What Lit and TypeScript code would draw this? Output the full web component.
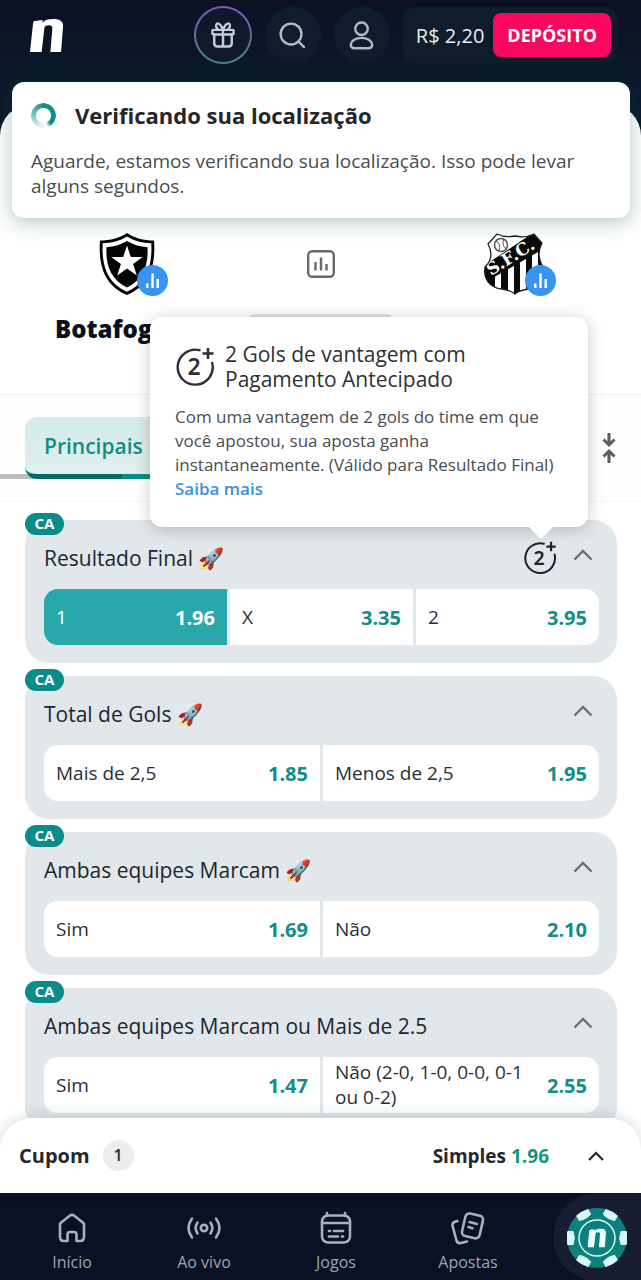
import { LitElement, html, css, svg } from 'lit';
import { customElement, property, state } from 'lit/decorators.js';

const logoMark = svg`<path fill="currentColor" d="M5 2 L13 1 L12.600 4 C15 1 19 0 24 0 C31 0 34.500 2.500 34 8 L32 34 H21 L23 10 C23.200 7.500 22 6.500 19 6.500 C16.500 6.500 15 7.500 14.700 10 L12 34 H0 L3 6 C3.200 3.500 3.500 2.200 5 2 Z"/>`;

const chevron = html`<svg class="chevron" viewBox="0 0 20 12" width="20" height="12" aria-hidden="true">
  <path d="M1.500 10.500 L10 2 L18.500 10.500" fill="none" stroke="currentColor" stroke-width="2.400" />
</svg>`;

const earlyPayout = (size: number) => html`<svg viewBox="0 0 40 40" width=${size} height=${size} aria-hidden="true">
  <path d="M24.500 3.200 A17.500 17.500 0 1 0 37.200 16" fill="none" stroke="currentColor" stroke-width="2.400" stroke-linecap="round" />
  <path d="M33 1 V12 M27.500 6.500 H38.500" fill="none" stroke="currentColor" stroke-width="2.600" />
  <text x="19" y="28" text-anchor="middle" font-family="Noto Sans, sans-serif" font-weight="600" font-size="23" fill="currentColor">2</text>
</svg>`;

const statsBadge = html`<svg class="stats" viewBox="0 0 31 31" width="31" height="31" aria-hidden="true">
  <circle cx="15.500" cy="15.500" r="15.500" fill="#3794f3" />
  <path d="M10.300 18.500 V23 M15.500 8.500 V23 M20.700 14 V23" stroke="#fff" stroke-width="2.400" />
</svg>`;

const crests: Record<string, unknown> = {
  botafogo: html`<svg viewBox="0 0 58 64" width="58" height="64" aria-hidden="true">
    <path d="M29 1 C36 6 46 8.500 56 8.500 C58 34 51 54 29 63 C7 54 0 34 2 8.500 C12 8.500 22 6 29 1 Z" fill="#050505" />
    <path d="M29 4.500 C36 9 45 11 53.300 11.300 C54.500 34 48.500 51 29 59.800 C9.500 51 3.500 34 4.700 11.300 C13 11 22 9 29 4.500 Z" fill="#fff" />
    <path d="M29 9 C36 13 42 14.800 49.500 15.200 C50.500 34 45 47.500 29 55.500 C13 47.500 7.500 34 8.500 15.200 C16 14.800 22 13 29 9 Z" fill="#050505" />
    <path d="M29 13.500 L32.800 25 H44.700 L35.100 32 L38.800 43.500 L29 36.500 L19.200 43.500 L22.900 32 L13.300 25 H25.200 Z" fill="#fff" />
  </svg>`,
  santos: html`<svg viewBox="0 0 60 62" width="60" height="64" aria-hidden="true">
    <defs><clipPath id="shield"><path d="M4 11 L13 1 C19 4 24 4.500 31 3 C38 4.500 44 4 50 1 L58 10 C53 20 55 27 59 34 C62 46 55 55 44 56 C38 57 34 58 31 61 C28 58 24 57 18 56 C6 55 -1 46 1 34 C8 27 9 20 4 11 Z" /></clipPath></defs>
    <g clip-path="url(#shield)">
      <rect width="62" height="62" fill="#fff" />
      <path d="M0 40 V62 H11 V36 Z M17 36 V62 H24 V36 Z M30 26 V62 H36 V26 Z M42 20 V62 H48 V20 Z M54 14 V62 H62 V14 Z" fill="#0a0a0a" />
      <path d="M-2 34 L46 2 H64 V16 L54 19 L0 50 Z" fill="#0a0a0a" />
      <g fill="none" stroke="#555"><circle cx="17" cy="12" r="6.500" stroke-width="1.500" /><path d="M12 8 Q17 10 15 18 M20 6 Q17 11 22 16" /></g>
      <text transform="translate(7 43) rotate(-32)" fill="#fff" font-family="DejaVu Serif, serif" font-weight="700" font-size="17">S.F.C.</text>
    </g>
    <path d="M4 11 L13 1 C19 4 24 4.500 31 3 C38 4.500 44 4 50 1 L58 10 C53 20 55 27 59 34 C62 46 55 55 44 56 C38 57 34 58 31 61 C28 58 24 57 18 56 C6 55 -1 46 1 34 C8 27 9 20 4 11 Z" fill="none" stroke="#222" stroke-width="1.300" />
  </svg>`,
};

const navIcons: Record<string, unknown> = {
  home: svg`<path d="M4 11.500 L14 3.500 Q16 2.200 18 3.500 L28 11.500 V25 Q28 29 24 29 H20.500 V22.500 Q20.500 20 18 20 H14 Q11.500 20 11.500 22.500 V29 H8 Q4 29 4 25 Z" />`,
  live: svg`<circle cx="16" cy="16" r="3.200" /><path d="M9.500 10.500 Q5.800 16 9.500 21.500 M22.500 10.500 Q26.200 16 22.500 21.500 M4 6.500 Q-3 16 4 25.500 M28 6.500 Q35 16 28 25.500" />`,
  games: svg`<rect x="2" y="3.500" width="28" height="27" rx="6" /><path d="M2 11 H30 M7 1 V4 M25 1 V4 M9 19 H10 M14 19 H23 M9 24.500 H18 M22 24.500 H23" />`,
  bets: svg`<rect x="11.500" y="2.500" width="18" height="23" rx="4" transform="rotate(13 21 14)" /><path d="M17.500 10 L25 12 M16.500 15 L20.500 16.200 M5.500 9 L3 9.800 Q0 10.800 .6 14 L4.500 28.500 Q5.500 31.800 9 31 L15 29.500" />`,
};

interface Pick { label: string; odd: string; active?: boolean }
interface Market { title: string; boosted?: boolean; early?: boolean; picks: Pick[] }

@customElement('market-card')
class MarketCard extends LitElement {
  @property({ attribute: false }) market!: Market;

  static styles = css`
    :host { display: block; position: relative; }
    * { box-sizing: border-box; }
    svg { flex: none; }
    button { font: inherit; color: inherit; border: 0; background: none; padding: 0; cursor: pointer; }
    .card { background: #e1e7ea; border-radius: 24px; padding: 0 18px 18px 19px; }
    .tag { position: absolute; top: -7px; left: 0; width: 39px; height: 22px; border-radius: 11px; background: #098c8a; color: #fff; font-size: 15px; font-weight: 700; line-height: 20px; text-align: center; }
    header { display: flex; align-items: center; height: 69px; padding-top: 6px; gap: 13px; }
    h2 { flex: 1; margin: 0; font-size: 21px; line-height: 28px; font-weight: 500; color: #20262f; }
    .info, .toggle { display: flex; }
    .toggle { color: #6c7075; padding: 0 6px 6px 3px; }
    .info { color: #20232d; }
    .picks { display: grid; grid-auto-flow: column; grid-auto-columns: 1fr; gap: 3px; border-radius: 14px; overflow: hidden; }
    .picks button { display: flex; align-items: center; justify-content: space-between; gap: 12px; height: 56px; padding: 0 12px; background: #fff; text-align: left; font-size: 19px; font-weight: 500; line-height: 25px; color: #2b2e33; }
    .picks strong { font-size: 20px; font-weight: 700; color: #128d88; }
    .picks .active, .picks .active strong { color: #fff; }
    .picks .active { background: #28a8aa; }
    .tip { position: absolute; z-index: 2; right: 29px; bottom: calc(100% - 7px); width: 438px; padding: 25px 25px 26px; border-radius: 12px; background: #fff; box-shadow: 0 2px 16px #00000038; color: #4a4c50; font-size: 17px; line-height: 24px; }
    .tip::after { content: ''; position: absolute; right: 37px; bottom: -8px; width: 20px; height: 20px; border-radius: 3px; background: #fff; transform: rotate(45deg); }
    .tiphead { display: flex; align-items: center; gap: 10px; margin-bottom: 13px; color: #2e3035; }
    .tip h3 { max-width: 280px; margin: 0; font-size: 21px; line-height: 25px; font-weight: 500; }
    .tip p { margin: 0; }
    .tip a { color: #3b8fdd; text-decoration: none; font-weight: 600; }
  `;

  render() {
    const m = this.market;
    return html`
      <section class="card">
        <span class="tag">CA</span>
        <header>
          <h2>${m.title}${m.boosted ? ' 🚀' : ''}</h2>
          ${m.early ? html`<button class="info" aria-label="Pagamento antecipado">${earlyPayout(34)}</button>` : ''}
          <button class="toggle" aria-label="Recolher">${chevron}</button>
        </header>
        <div class="picks">
          ${m.picks.map((p) => html`<button class=${p.active ? 'active' : ''}><span>${p.label}</span><strong>${p.odd}</strong></button>`)}
        </div>
      </section>
      ${m.early ? html`<div class="tip" role="tooltip">
        <div class="tiphead">${earlyPayout(40)}<h3>2 Gols de vantagem com Pagamento Antecipado</h3></div>
        <p>Com uma vantagem de 2 gols do time em que você apostou, sua aposta ganha instantaneamente. (Válido para Resultado Final)</p>
        <a href="#">Saiba mais</a>
      </div>` : ''}
    `;
  }
}

@customElement('app-root')
class AppRoot extends LitElement {
  @state() markets: Market[] = [
    { title: 'Resultado Final', boosted: true, early: true, picks: [{ label: '1', odd: '1.96', active: true }, { label: 'X', odd: '3.35' }, { label: '2', odd: '3.95' }] },
    { title: 'Total de Gols', boosted: true, picks: [{ label: 'Mais de 2,5', odd: '1.85' }, { label: 'Menos de 2,5', odd: '1.95' }] },
    { title: 'Ambas equipes Marcam', boosted: true, picks: [{ label: 'Sim', odd: '1.69' }, { label: 'Não', odd: '2.10' }] },
    { title: 'Ambas equipes Marcam ou Mais de 2.5', picks: [{ label: 'Sim', odd: '1.47' }, { label: 'Não (2-0, 1-0, 0-0, 0-1 ou 0-2)', odd: '2.55' }] },
  ];

  static styles = css`
    :host { display: flex; flex-direction: column; position: relative; height: 100vh; overflow: hidden; background: linear-gradient(#0b1023, #0a1a2a 80px, #0a1a2a); font-family: 'Open Sans', 'Noto Sans', sans-serif; color: #26282d; }
    * { box-sizing: border-box; }
    button { font: inherit; color: inherit; border: 0; background: none; padding: 0; cursor: pointer; }
    a { text-decoration: none; color: inherit; }
    .top { flex: none; display: flex; align-items: center; gap: 13px; height: 104px; padding: 0 24px 34px 30px; }
    .logo { display: flex; margin-right: auto; color: #fff; }
    .round { display: flex; align-items: center; justify-content: center; width: 56px; height: 56px; border-radius: 50%; background: #0f1c2d; color: #b3b9c6; }
    .gift { width: 58px; height: 58px; border: 2px solid transparent; background: linear-gradient(#0f172b, #0e1b2c) padding-box, linear-gradient(#7d59b4, #41868c) border-box; color: #c5cad6; }
    .wallet { display: flex; align-items: center; gap: 9px; height: 56px; padding: 0 6px 0 13px; border-radius: 12px; background: #0e1c2c; color: #e9edf3; font-size: 20px; white-space: nowrap; }
    .deposit { height: 44px; padding: 0 14px; border-radius: 8px; background: #f9085f; color: #fff; font-size: 18px; font-weight: 700; }
    main { flex: 1; min-height: 0; overflow: hidden; border-radius: 32px 32px 0 0; background: #fff; }
    .match { display: grid; grid-template-columns: 1fr 134px 1fr; align-items: start; height: 291px; padding: 128px 0 0; border-bottom: 1px solid #f0f0f0; justify-items: center; }
    .team { display: flex; flex-direction: column; align-items: center; gap: 14px; }
    .crest { position: relative; display: flex; height: 66px; }
    .stats { position: absolute; right: -12px; bottom: 2px; }
    .team strong { font-size: 24px; line-height: 34px; font-weight: 800; color: #0c0f20; white-space: nowrap; }
    .mid { display: flex; flex-direction: column; align-items: center; gap: 36px; padding-top: 18px; color: #66696e; }
    .pill { width: 147px; height: 30px; border-radius: 8px; background: #e0e3e4; }
    .tabs { position: relative; display: flex; align-items: center; justify-content: space-between; height: 107px; padding: 0 25px; background: #fefefe; border-bottom: 1px solid #f6f6f6; }
    .tab { height: 62px; padding: 0 19px; border-radius: 12px; border-bottom: 5px solid #0a8d87; background: linear-gradient(#d6ebea, #dfeeef); color: #128d88; font-size: 21px; font-weight: 600; }
    .scrollbar { position: absolute; left: 0; bottom: 22px; width: 19%; height: 5px; background: #00000040; }
    .order { display: flex; padding: 0; color: #5a5d61; }
    .list { display: flex; flex-direction: column; gap: 13px; padding: 18px 24px 0 25px; }
    .toast { position: absolute; z-index: 5; top: 82px; left: 12px; right: 11px; padding: 16px 19px 19px; border-radius: 12px; background: #fff; box-shadow: 0 4px 20px #0a4a4650; }
    .toasthead { display: flex; align-items: center; gap: 19px; margin-bottom: 17px; font-size: 22px; line-height: 34px; font-weight: 700; color: #24262b; }
    .spinner { width: 25px; height: 25px; border-radius: 50%; background: conic-gradient(#128d88 0 38%, #128d8800 45%, #128d8820 55%, #128d88); mask: radial-gradient(circle, transparent 7px, #000 8px); }
    .toast p { margin: 0; font-size: 19px; line-height: 25px; color: #4a4c50; }
    .coupon { flex: none; position: relative; z-index: 3; display: flex; align-items: center; height: 75px; margin-top: -32px; padding: 0 37px 0 19px; border-radius: 32px 32px 0 0; background: #fff; box-shadow: 0 -2px 14px #00303028; font-size: 19px; font-weight: 700; text-align: left; }
    .coupon .name { font-size: 20px; }
    .count { width: 31px; height: 31px; margin-left: 13px; border-radius: 50%; background: #ededed; font-size: 16px; font-weight: 600; line-height: 31px; text-align: center; }
    .simple { margin: 0 39px 0 auto; }
    .simple b { color: #12967f; font-weight: 700; }
    nav { flex: none; display: grid; grid-template-columns: repeat(4, 1fr) 107px; height: 87px; padding-left: 6px; background: #0b1124; color: #9da3b4; font-size: 16px; font-weight: 500; overflow: hidden; }
    nav a { display: flex; flex-direction: column; align-items: center; padding-top: 19px; gap: 6px; line-height: 24px; }
    nav svg { flex: none; }
    .strokes { fill: none; stroke: #a9afbf; stroke-width: 2.600; stroke-linecap: round; stroke-linejoin: round; overflow: visible; }
    .gift .strokes { stroke: currentColor; }
    nav .poker { justify-self: end; width: 88px; height: 88px; padding: 15px 0 0; border-radius: 44px 0 0 44px; background: #171c32; }
  `;

  render() {
    return html`
      <header class="top">
        <a class="logo" href="#" aria-label="Página inicial"><svg viewBox="0 0 35 34" width="34" height="35">${logoMark}</svg></a>
        <button class="round gift" aria-label="Promoções">
          <svg class="strokes" viewBox="0 0 26 28" width="24" height="26"><rect x="1.500" y="8.500" width="23" height="5" rx="1" /><path d="M3.500 13.500 V23 Q3.500 26.500 7 26.500 H19 Q22.500 26.500 22.500 23 V13.500 M13 8.500 V26.500 M13 8.500 C10 0 5 0 5.500 4.500 Q5.700 6.500 7.500 8 M13 8.500 C16 0 21 0 20.500 4.500 Q20.300 6.500 18.500 8" /></svg>
        </button>
        <button class="round" aria-label="Buscar">
          <svg viewBox="0 0 28 28" width="27" height="27" fill="none" stroke="currentColor" stroke-width="2.500" stroke-linecap="round"><circle cx="12.500" cy="12.500" r="10.800" /><path d="M20.500 20.500 L26 26" /></svg>
        </button>
        <button class="round" aria-label="Conta">
          <svg viewBox="0 0 26 30" width="25" height="29" fill="none" stroke="currentColor" stroke-width="2.500"><circle cx="13" cy="8" r="6.500" /><path d="M13 17.500 C19 17.500 23.700 20.500 24.200 24.500 Q24 28.300 20 28.300 H6 Q2 28.300 1.800 24.500 C2.300 20.500 7 17.500 13 17.500 Z" /></svg>
        </button>
        <div class="wallet"><span>R$ 2,20</span><button class="deposit">DEPÓSITO</button></div>
      </header>

      <main>
        <section class="match">
          <div class="team"><span class="crest">${crests.botafogo}${statsBadge}</span><strong>Botafogo RJ</strong></div>
          <div class="mid">
            <svg viewBox="0 0 28 28" width="28" height="28" fill="none" stroke="currentColor" stroke-width="2.400"><rect x="1.200" y="1.200" width="25.600" height="25.600" rx="4" /><path d="M8.500 12 V20.500 M14 7.500 V20.500 M19.500 14 V20.500" /></svg>
            <span class="pill"></span>
          </div>
          <div class="team"><span class="crest">${crests.santos}${statsBadge}</span><strong>Santos</strong></div>
        </section>
        <section class="tabs">
          <button class="tab">Principais</button>
          <span class="scrollbar"></span>
          <button class="order" aria-label="Recolher todos">
            <svg viewBox="0 0 14 30" width="14" height="30" fill="none" stroke="currentColor" stroke-width="3"><path d="M7 0 V11 M1.500 6.500 L7 12 L12.500 6.500 M7 30 V19 M1.500 23.500 L7 18 L12.500 23.500" /></svg>
          </button>
        </section>
        <div class="list">
          ${this.markets.map((m) => html`<market-card .market=${m}></market-card>`)}
        </div>
      </main>

      <button class="coupon">
        <span class="name">Cupom</span><span class="count">1</span>
        <span class="simple">Simples <b>1.96</b></span>
        <svg viewBox="0 0 16 10" width="16" height="10" fill="none" stroke="#25282d" stroke-width="2.200"><path d="M1 9 L8 2 L15 9" /></svg>
      </button>

      <nav>
        ${[['home', 'Início'], ['live', 'Ao vivo'], ['games', 'Jogos'], ['bets', 'Apostas']].map(
          ([icon, label]) => html`<a href="#"><svg class="strokes" viewBox="0 0 32 32" width="32" height="32">${navIcons[icon]}</svg>${label}</a>`,
        )}
        <a class="poker" href="#" aria-label="Cassino">
          <svg viewBox="0 0 60 60" width="60" height="60">
            <circle cx="30" cy="30" r="30" fill="#0d7f7c" />
            ${[0, 60, 120, 180, 240, 300].map((a) => svg`<path transform="rotate(${a} 30 30)" d="M59.300 23.500 A30 30 0 0 1 59.300 36.500 L54 36.500 Q51.500 30 54 23.500 Z" fill="#d5fbf8" stroke="#d5fbf8" stroke-linejoin="round" />`)}
            <circle cx="30" cy="30" r="18" fill="none" stroke="#d5fbf8" stroke-width="1.500" />
            <svg x="20.500" y="20" width="19" height="20" viewBox="0 0 35 34" color="#e9fffd">${logoMark}</svg>
          </svg>
        </a>
      </nav>

      <div class="toast" role="status">
        <div class="toasthead"><span class="spinner"></span>Verificando sua localização</div>
        <p>Aguarde, estamos verificando sua localização. Isso pode levar alguns segundos.</p>
      </div>
    `;
  }
}
